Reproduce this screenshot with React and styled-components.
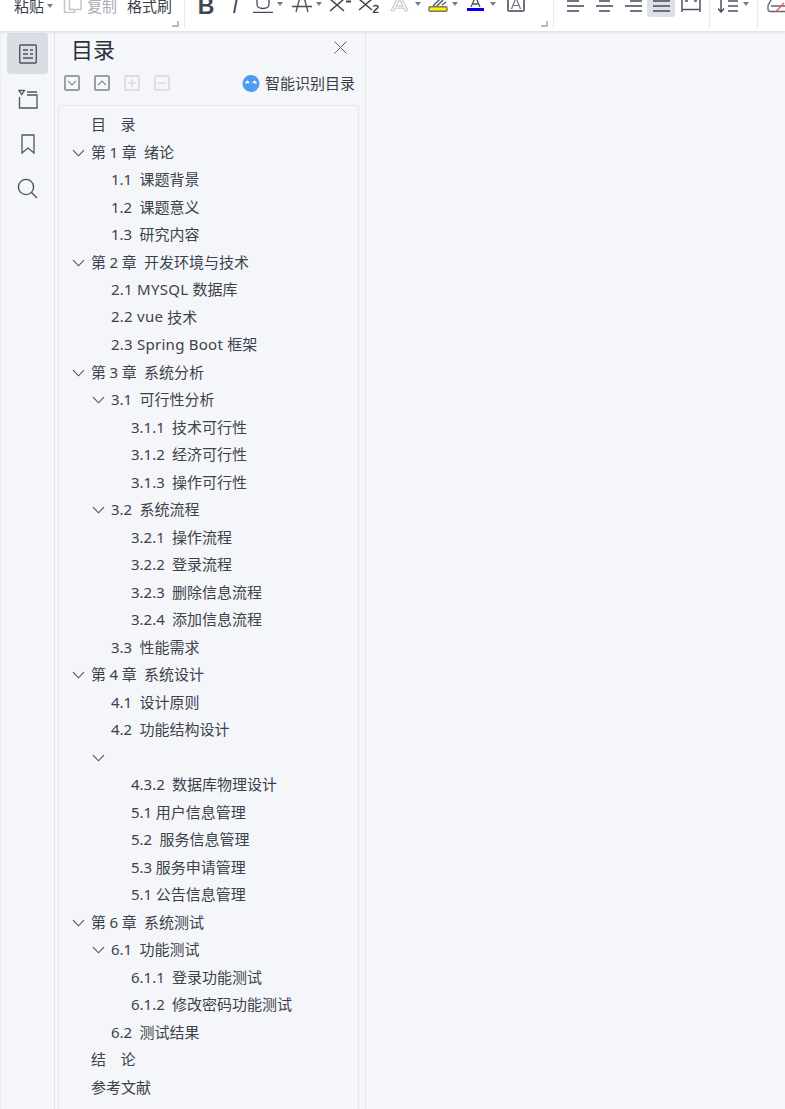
import styled, { createGlobalStyle } from "styled-components";

const Global = createGlobalStyle`
  html, body { margin: 0; padding: 0; height: 100%; overflow: hidden; background: #f5f6f9; }
  #root { height: 100%; }
  * { box-sizing: border-box; }
`;

const Page = styled.div`
  width: 785px;
  height: 1109px;
  display: flex;
  flex-direction: column;
  overflow: hidden;
  font-family: "Noto Sans", "Noto Sans CJK SC", sans-serif;
  color: #3c424d;
`;

/* toolbar, cut off by the top of the window */
const Toolbar = styled.div`
  height: 31px;
  flex: none;
  display: flex;
  align-items: flex-start;
  background: #fff;
  box-shadow: 0 1px 3px rgba(40, 50, 70, 0.14);
  position: relative;
  z-index: 2;
  overflow: hidden;
`;
const Group = styled.div`
  position: relative;
  height: 28px;
  flex: none;
  width: ${(p) => p.$w}px;
  padding-left: ${(p) => p.$pad || 0}px;
  display: flex;
  align-items: flex-start;
  border-right: ${(p) => (p.$noLine ? "none" : "1px solid #e9eaec")};
`;
const Launcher = styled.i`
  position: absolute;
  right: 5px;
  bottom: 1px;
  width: 7px;
  height: 6px;
  border-right: 2px solid #b4b9c2;
  border-bottom: 2px solid #b4b9c2;
`;
const Tool = styled.div`
  flex: none;
  width: ${(p) => p.$w}px;
  margin-left: ${(p) => p.$ml || 0}px;
  height: 17px;
  padding-bottom: 4px;
  display: flex;
  align-items: flex-end;
  justify-content: center;
  border-radius: 0 0 3px 3px;
  background: ${(p) => (p.$active ? "#dde0e5" : "transparent")};
`;
const ToolText = styled.span`
  font-size: 15px;
  line-height: 18px;
  height: 17px;
  margin-top: -3px;
  margin-left: ${(p) => p.$ml || 0}px;
  white-space: nowrap;
  color: ${(p) => (p.$muted ? "#a9adb4" : "#3a3f48")};
`;
const Letter = styled.span`
  font-family: "Liberation Sans", sans-serif;
  font-size: ${(p) => p.$size}px;
  line-height: 14px;
  font-weight: ${(p) => (p.$bold ? 700 : 400)};
  font-style: ${(p) => (p.$italic ? "italic" : "normal")};
  color: #3f4652;
`;
const Caret = styled.i`
  flex: none;
  width: 0;
  height: 0;
  margin: ${(p) => p.$top ?? 2}px 0 0 ${(p) => p.$ml ?? 3}px;
  border-left: 3.5px solid transparent;
  border-right: 3.5px solid transparent;
  border-top: 4px solid #757c89;
`;

const Body = styled.div`
  flex: 1;
  min-height: 0;
  display: flex;
`;
const Rail = styled.nav`
  width: 55px;
  flex: none;
  padding: 2px 6px 0 7px;
  border-left: 1px solid #eceef1;
  border-right: 1px solid #e2e4e8;
  display: flex;
  flex-direction: column;
  gap: 4px;
`;
const RailTile = styled.div`
  width: 41px;
  height: 41px;
  margin-left: -1px;
  border-radius: 3px;
  display: flex;
  align-items: center;
  justify-content: center;
  background: ${(p) => (p.$active ? "#d9dde4" : "transparent")};
`;
const Panel = styled.section`
  width: 311px;
  flex: none;
  border-right: 1px solid #e2e4e8;
  display: flex;
  flex-direction: column;
  min-height: 0;
`;
const PanelHead = styled.header`
  height: 33px;
  flex: none;
  padding: 0 18px 0 16px;
  display: flex;
  align-items: center;
  justify-content: space-between;
`;
const Title = styled.h1`
  margin: 0;
  font-size: 22px;
  font-weight: 400;
  color: #2b313c;
`;
const Actions = styled.div`
  height: 37px;
  flex: none;
  padding: 1px 10px 0 9px;
  display: flex;
  align-items: center;
  justify-content: space-between;
`;
const ActionGroup = styled.div`
  display: flex;
  gap: 14px;
`;
const ActionBtn = styled.div`
  width: 16px;
  height: 16px;
  border: 2px solid ${(p) => (p.$off ? "#dcdee2" : "#9a9ea5")};
  border-radius: 2px;
  display: flex;
  align-items: center;
  justify-content: center;
`;
const Smart = styled.div`
  display: flex;
  align-items: center;
  gap: 5px;
  font-size: 15px;
  line-height: 20px;
  color: #363c47;
`;
const TreeCard = styled.div`
  margin: 4px 6px 0 3px;
  flex: none;
  padding-top: 4px;
  height: 1100px;
  border: 1px solid #e4e6ea;
  border-radius: 3px 3px 0 0;
`;
const Row = styled.div`
  height: 27.5px;
  padding-left: ${(p) => 10 + p.$level * 20}px;
  display: flex;
  align-items: center;
  font-size: 15px;
  word-spacing: -0.3px;
  white-space: pre;
  color: #3c424d;
`;
const Arrow = styled.span`
  width: 22px;
  flex: none;
  padding: 3px 3px 0 0;
  display: flex;
  justify-content: center;
`;
const Latin = styled.span`
  letter-spacing: 0.25px;
  word-spacing: 0;
`;
const Rest = styled.div`
  flex: 1;
`;

const Stroke = ({ w = 20, h = 20, children, color = "#4d5461", sw = 1.3 }) => (
  <svg width={w} height={h} viewBox={`0 0 ${w} ${h}`} fill="none" stroke={color} strokeWidth={sw}>
    {children}
  </svg>
);

const Lines = ({ rows }) => (
  <Stroke w={19} h={15} sw={1.6}>
    {rows.map(([a, b], i) => (
      <path key={i} d={`M${a} ${3 + i * 5}H${b}`} />
    ))}
  </Stroke>
);

const Chevron = () => (
  <svg width="13" height="8" viewBox="0 0 13 8" fill="none" stroke="#4a505b" strokeWidth="1.1">
    <path d="M1 1.2 6.5 6.8 12 1.2" />
  </svg>
);

const tree = [
  [0, "目    录"],
  [0, "第 1 章  绪论", 1],
  [1, "1.1  课题背景"],
  [1, "1.2  课题意义"],
  [1, "1.3  研究内容"],
  [0, "第 2 章  开发环境与技术", 1],
  [1, <><Latin>2.1 MYSQL </Latin>数据库</>],
  [1, <><Latin>2.2 vue </Latin>技术</>],
  [1, <><Latin>2.3 Spring Boot </Latin>框架</>],
  [0, "第 3 章  系统分析", 1],
  [1, "3.1  可行性分析", 1],
  [2, "3.1.1  技术可行性"],
  [2, "3.1.2  经济可行性"],
  [2, "3.1.3  操作可行性"],
  [1, "3.2  系统流程", 1],
  [2, "3.2.1  操作流程"],
  [2, "3.2.2  登录流程"],
  [2, "3.2.3  删除信息流程"],
  [2, "3.2.4  添加信息流程"],
  [1, "3.3  性能需求"],
  [0, "第 4 章  系统设计", 1],
  [1, "4.1  设计原则"],
  [1, "4.2  功能结构设计"],
  [1, "", 1],
  [2, "4.3.2  数据库物理设计"],
  [2, "5.1 用户信息管理"],
  [2, "5.2  服务信息管理"],
  [2, "5.3 服务申请管理"],
  [2, "5.1 公告信息管理"],
  [0, "第 6 章  系统测试", 1],
  [1, "6.1  功能测试", 1],
  [2, "6.1.1  登录功能测试"],
  [2, "6.1.2  修改密码功能测试"],
  [1, "6.2  测试结果"],
  [0, "结    论"],
  [0, "参考文献"],
];

export default function App() {
  return (
    <Page>
      <Global />
      <Toolbar>
        <Group $w={185} $pad={14}>
          <ToolText>粘贴</ToolText>
          <Caret $top={4} />
          <Tool $w={20} $ml={9}>
            <Stroke w={20} h={15} color="#c2c5ca" sw={1.5}>
              <path d="M7.5 0V11.5H19V0M2.5 0V14.5H12.5V11.5" />
            </Stroke>
          </Tool>
          <ToolText $muted $ml={5}>复制</ToolText>
          <ToolText $ml={10}>格式刷</ToolText>
          <Launcher />
        </Group>
        <Group $w={369} $pad={10}>
          <Tool $w={22}><Letter $bold $size={23}>B</Letter></Tool>
          <Tool $w={14} $ml={11}><Letter $italic $size={20}>I</Letter></Tool>
          <Tool $w={22} $ml={10}>
            <Stroke w={22} h={14} color="#454c58" sw={1.3}>
              <path d="M5 0V5C5 8 7.5 9.5 11 9.5S17 8 17 5V0" />
              <path d="M1 13.4H21" />
            </Stroke>
          </Tool>
          <Caret />
          <Tool $w={22} $ml={8}>
            <Stroke w={22} h={14} color="#454c58" sw={1.3}>
              <path d="M1 7.5H21M8.5 0 5 13M13.5 0 17 13" />
            </Stroke>
          </Tool>
          <Caret />
          <Tool $w={22} $ml={7}>
            <Stroke w={22} h={14} color="#3f4652" sw={1.5}>
              <path d="M1 0 15 12M15 0 1 12" />
              <path d="M17 2.5H22" strokeWidth="2" />
            </Stroke>
          </Tool>
          <Tool $w={21} $ml={7}>
            <Stroke w={21} h={14} color="#3f4652" sw={1.5}>
              <path d="M1 0 14 11M14 0 1 11" />
              <path d="M15.5 7.5C16 6 20 6 20 8S15.5 11 15.5 13.5H20.5" strokeWidth="1.6" />
            </Stroke>
          </Tool>
          <Tool $w={23} $ml={9}>
            <Stroke w={23} h={14} color="#c6c9ce" sw={3.6}>
              <path d="M4 12.5 11.5 -2 19 12.5M6 8H17" />
              <path d="M4 12.5 11.5 -2 19 12.5M6 8H17" stroke="#fff" strokeWidth="1.2" />
            </Stroke>
          </Tool>
          <Caret $ml={4} />
          <Tool $w={20} $ml={7}>
            <Stroke w={20} h={14} color="#4d5461" sw={1.4}>
              <path d="M5 7 13 -1M8 8 15 1M14 6 18 3" />
              <rect x="1" y="7.7" width="18" height="4.6" rx="1" fill="#ffee00" stroke="#75776a" />
            </Stroke>
          </Tool>
          <Caret $ml={4} />
          <Tool $w={17} $ml={9}>
            <Stroke w={17} h={14} color="#4d5461" sw={1.3}>
              <path d="M4 8 7.5 0M13 8 9.5 0M5 5H12" />
              <path d="M0 10.5H17" stroke="#0000f0" strokeWidth="3" />
            </Stroke>
          </Tool>
          <Caret $ml={6} />
          <Tool $w={18} $ml={11}>
            <Stroke w={18} h={14} color="#6e7480" sw={2}>
              <rect x="1" y="-4" width="16" height="16" rx="1" />
              <path d="M4.5 10 9 -1 13.5 10M6 6.5H12" strokeWidth="1.2" />
            </Stroke>
          </Tool>
          <Launcher />
        </Group>
        <Group $w={156} $pad={11}>
          <Tool $w={20}><Lines rows={[[1, 13], [1, 18], [1, 13]]} /></Tool>
          <Tool $w={20} $ml={9}><Lines rows={[[4, 15], [1, 18], [4, 15]]} /></Tool>
          <Tool $w={20} $ml={9}><Lines rows={[[6, 18], [1, 18], [6, 18]]} /></Tool>
          <Tool $w={28} $ml={4} $active><Lines rows={[[1, 18], [1, 18], [1, 18]]} /></Tool>
          <Tool $w={20} $ml={6}>
            <Stroke w={20} h={15} sw={1.5}>
              <path d="M1 0V14M19 0V14M1 11.5H19" />
              <path d="M4 3H7M13 3H16" />
            </Stroke>
          </Tool>
        </Group>
        <Group $w={48} $pad={8}>
          <Tool $w={23}>
            <Stroke w={23} h={15} sw={1.5}>
              <path d="M3 0V13.5M0 10.5 3 14 6 10.5" />
              <path d="M10 3H20M10 8H20M10 13H20" strokeWidth="1.6" />
            </Stroke>
          </Tool>
          <Caret $ml={2} />
        </Group>
        <Group $w={27} $pad={9} $noLine>
          <Tool $w={18}>
            <Stroke w={18} h={15} color="#5f6570" sw={1.3}>
              <path d="M5 0 1 7.5V11C1 12.6 2 13.5 3.5 13.5H18M4 8H18" />
              <path d="M8.5 14 17 5" stroke="#ee5a5a" />
            </Stroke>
          </Tool>
        </Group>
      </Toolbar>
      <Body>
        <Rail>
          <RailTile $active>
            <Stroke w={18} h={20} sw={1.4}>
              <rect x="0.7" y="1" width="16.6" height="18" rx="1" />
              <path d="M4 6H9M11 6H14M4 10H9M11 10H14M4 14H14" />
            </Stroke>
          </RailTile>
          <RailTile>
            <Stroke w={20} h={20} sw={1.3}>
              <path d="M1 1.5H6.5L3.7 5.5ZM9 3H19M1.5 8V19H19V6H9" />
            </Stroke>
          </RailTile>
          <RailTile>
            <Stroke w={14} h={20} sw={1.3}>
              <path d="M1 1H13V19L7 14 1 19Z" />
            </Stroke>
          </RailTile>
          <RailTile>
            <Stroke w={21} h={21} sw={1.4}>
              <circle cx="9" cy="9" r="7.6" />
              <path d="M14.5 14.5 20 20" />
            </Stroke>
          </RailTile>
        </Rail>
        <Panel>
          <PanelHead>
            <Title>目录</Title>
            <Stroke w={13} h={13} color="#5d6470" sw={1}>
              <path d="M0.5 0.5 12.5 12.5M12.5 0.5 0.5 12.5" />
            </Stroke>
          </PanelHead>
          <Actions>
            <ActionGroup>
              <ActionBtn>
                <Stroke w={10} h={6} color="#85898f" sw={1.2}><path d="M1 0.8 5 4.8 9 0.8" /></Stroke>
              </ActionBtn>
              <ActionBtn>
                <Stroke w={10} h={6} color="#85898f" sw={1.2}><path d="M1 5.2 5 1.2 9 5.2" /></Stroke>
              </ActionBtn>
              <ActionBtn $off>
                <Stroke w={8} h={8} color="#d2d5da" sw={1.2}><path d="M0 4H8M4 0V8" /></Stroke>
              </ActionBtn>
              <ActionBtn $off>
                <Stroke w={8} h={8} color="#d2d5da" sw={1.2}><path d="M0 4H8" /></Stroke>
              </ActionBtn>
            </ActionGroup>
            <Smart>
              <svg width="18" height="17" viewBox="0 0 18 17">
                <circle cx="9" cy="8.5" r="8.5" fill="#4f9bf4" />
                <path d="M3.5 8.5 5.5 6.5 7 8M11 8 12.5 6.5 14.5 8.5" fill="none" stroke="#fff" strokeWidth="1.6" />
              </svg>
              智能识别目录
            </Smart>
          </Actions>
          <TreeCard>
            {tree.map(([level, label, open], i) => (
              <Row key={i} $level={level}>
                <Arrow>{open ? <Chevron /> : null}</Arrow>
                {label}
              </Row>
            ))}
          </TreeCard>
        </Panel>
        <Rest />
      </Body>
    </Page>
  );
}
